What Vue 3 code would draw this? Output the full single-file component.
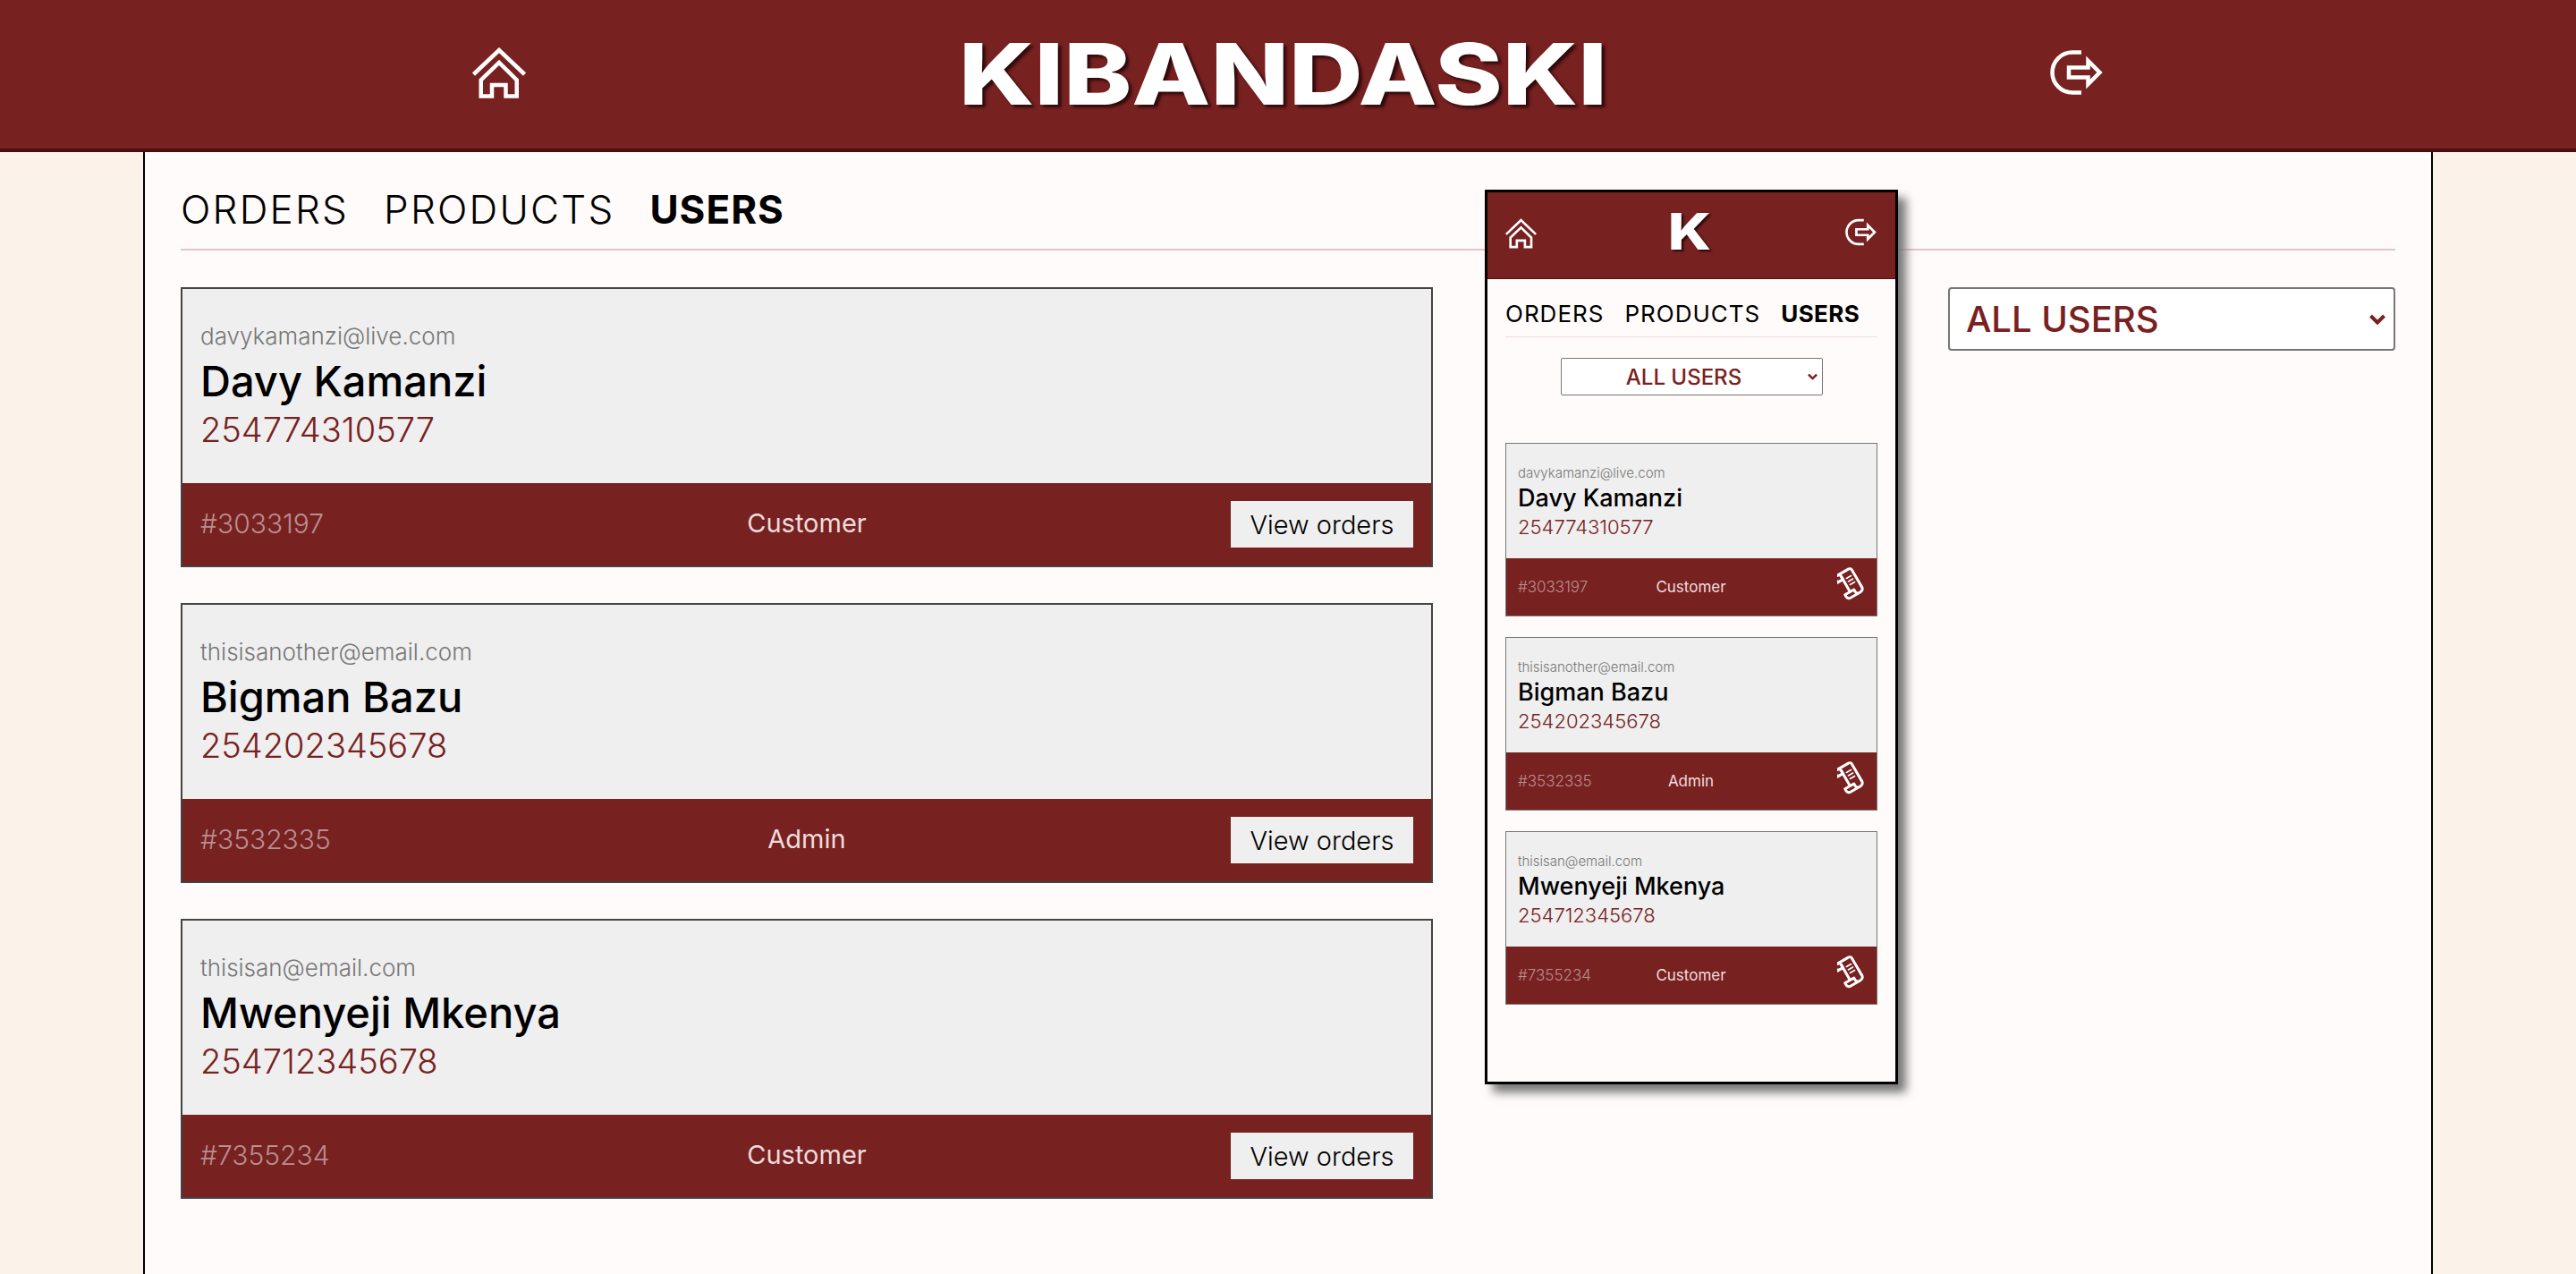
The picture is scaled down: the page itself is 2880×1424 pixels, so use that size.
<script setup>
const users = [
  { email: 'davykamanzi@live.com', name: 'Davy Kamanzi', phone: '254774310577', id: '#3033197', role: 'Customer' },
  { email: 'thisisanother@email.com', name: 'Bigman Bazu', phone: '254202345678', id: '#3532335', role: 'Admin' },
  { email: 'thisisan@email.com', name: 'Mwenyeji Mkenya', phone: '254712345678', id: '#7355234', role: 'Customer' }
]
</script>

<template>
  <div class="page">
    <header class="topbar">
      <svg class="homeIcon" viewBox="0 0 60 57" fill="none" stroke="#fff" stroke-width="4.5">
        <path d="M1.5 30 L30 3 L58.5 30" />
        <path d="M9.75 54.5 V36.5 L30 17 L49.75 36.5 V54.5 H37.5 V42 H22 V54.5 Z" />
      </svg>
      <h1 class="logo">KIBANDASKI</h1>
      <svg class="exitIcon" viewBox="0 0 59 50" fill="none" stroke="#fff" stroke-width="4.5">
        <path d="M35 2.5 H25 A22.5 22.5 0 0 0 25 47.5 H35" />
        <path d="M21 19.5 H42.5 V12 L55.5 25 L42.5 38 V30.5 H21 Z" />
      </svg>
    </header>

    <main class="content">
      <nav class="tabs">
        <span>ORDERS</span>
        <span>PRODUCTS</span>
        <span class="active">USERS</span>
      </nav>

      <div class="columns">
        <div class="cards">
          <article v-for="user in users" :key="user.id" class="card">
            <div class="cardBody">
              <p class="email">{{ user.email }}</p>
              <p class="name">{{ user.name }}</p>
              <p class="phone">{{ user.phone }}</p>
            </div>
            <div class="cardFooter">
              <span class="userId">{{ user.id }}</span>
              <span class="role">{{ user.role }}</span>
              <button class="viewBtn">View orders</button>
            </div>
          </article>
        </div>

        <div class="filterWrap">
          <select class="filter">
            <option>ALL USERS</option>
          </select>
          <svg class="chevron" viewBox="0 0 18 12" fill="none" stroke="#782121" stroke-width="4">
            <path d="M1.5 2 L9 9.5 L16.5 2" />
          </svg>
        </div>
      </div>

      <!-- phone preview, sits on top of the tab divider -->
      <div class="mobile">
        <header class="mTopbar">
          <svg class="mHome" viewBox="0 0 60 57" fill="none" stroke="#fff" stroke-width="4.5">
            <path d="M1.5 30 L30 3 L58.5 30" />
            <path d="M9.75 54.5 V36.5 L30 17 L49.75 36.5 V54.5 H37.5 V42 H22 V54.5 Z" />
          </svg>
          <span class="mLogo">K</span>
          <svg class="mExit" viewBox="0 0 59 50" fill="none" stroke="#fff" stroke-width="4.5">
            <path d="M35 2.5 H25 A22.5 22.5 0 0 0 25 47.5 H35" />
            <path d="M21 19.5 H42.5 V12 L55.5 25 L42.5 38 V30.5 H21 Z" />
          </svg>
        </header>
        <div class="mContent">
          <nav class="mTabs">
            <span>ORDERS</span>
            <span>PRODUCTS</span>
            <span class="active">USERS</span>
          </nav>
          <div class="mFilterWrap">
            <select class="mFilter">
              <option>ALL USERS</option>
            </select>
            <svg class="mChevron" viewBox="0 0 18 12" fill="none" stroke="#782121" stroke-width="4">
              <path d="M1.5 2 L9 9.5 L16.5 2" />
            </svg>
          </div>
          <div class="mCards">
            <article v-for="user in users" :key="user.id" class="mCard">
              <div class="mBody">
                <p class="mEmail">{{ user.email }}</p>
                <p class="mName">{{ user.name }}</p>
                <p class="mPhone">{{ user.phone }}</p>
              </div>
              <div class="mFooter">
                <span class="mId">{{ user.id }}</span>
                <span class="mRole">{{ user.role }}</span>
                <svg class="scroll" viewBox="0 0 30 37" fill="none" stroke="#fff" stroke-width="3" stroke-linejoin="round" stroke-linecap="round">
                  <g transform="rotate(-30 15 18.5)">
                    <path d="M7 3 H21 a3 3 0 0 1 3 3 V27" />
                    <path d="M3 10 V6.5 a3.5 3.5 0 0 1 7 0 V10 Z" />
                    <path d="M10 7 V25" />
                    <path d="M24 27 a4 4 0 0 1 -4 5 H7 a3.5 3.5 0 0 1 -3.5 -3.5 V26 H15 V28.5 a3.5 3.5 0 0 0 3.5 3.5" />
                    <path d="M14 11 H20 M14 15 H20 M14 19 H20" stroke-width="1.6" />
                  </g>
                </svg>
              </div>
            </article>
          </div>
        </div>
      </div>
    </main>
  </div>
</template>

<style>
body {
  background: #fbf2e9;
}
</style>

<style scoped>
.page {
  font-family: Inter, "Open Sans", sans-serif;
  color: #000;
}

p {
  margin: 0;
}

.topbar {
  box-sizing: border-box;
  height: 170px;
  background: #782121;
  border-bottom: 4px solid #4a1010;
  display: flex;
  align-items: center;
  position: relative;
}

.homeIcon {
  width: 60px;
  height: 57px;
  margin-left: 528px;
  margin-top: -3px;
}

.logo {
  margin: -2px 3px 0 484px;
  width: 725px;
  font-size: 95px;
  font-weight: 800;
  line-height: 1;
  color: #fff;
  white-space: nowrap;
  text-shadow: 3px 3px 3px #2e0a0a;
  transform: scaleX(1.205);
  transform-origin: left center;
}

.exitIcon {
  width: 59px;
  height: 50px;
  margin-left: 492px;
  margin-top: -5px;
}

.content {
  box-sizing: border-box;
  position: relative;
  width: 2560px;
  min-height: 1254px;
  margin-left: 160px;
  padding: 0 40px;
  background: #fffbfa;
  border-left: 2px solid #000;
  border-right: 2px solid #000;
}

.tabs {
  height: 110px;
  display: flex;
  align-items: flex-end;
  gap: 39px;
  padding-bottom: 22px;
  box-sizing: border-box;
  border-bottom: 2px solid #dfc7c7;
  font-size: 44px;
  font-weight: 300;
  letter-spacing: 2.2px;
  line-height: 1;
}

.active {
  font-weight: 700;
  letter-spacing: 1px;
}

.columns {
  display: flex;
  justify-content: space-between;
  align-items: flex-start;
  padding-top: 41px;
}

.cards {
  width: 1400px;
  display: flex;
  flex-direction: column;
  gap: 40px;
}

.card {
  box-sizing: border-box;
  height: 313px;
  border: 2px solid #444;
  display: flex;
  flex-direction: column;
}

.cardBody {
  flex: 1;
  background: #efefef;
  padding: 37px 20px 0;
}

.email {
  font-size: 26px;
  font-weight: 300;
  line-height: 32px;
  color: #777;
}

.name {
  margin-top: 4px;
  font-size: 47px;
  font-weight: 500;
  line-height: 60px;
}

.phone {
  font-size: 38px;
  font-weight: 300;
  line-height: 48px;
  color: #782121;
}

.cardFooter {
  height: 92px;
  background: #782121;
  padding: 0 20px;
  display: grid;
  grid-template-columns: 1fr auto 1fr;
  align-items: center;
}

.userId {
  margin-top: -3px;
  font-size: 30px;
  font-weight: 300;
  color: #b98f8f;
}

.role {
  margin-top: -3px;
  font-size: 29px;
  color: #efdcdc;
}

.viewBtn {
  justify-self: end;
  width: 204px;
  height: 52px;
  padding: 0;
  border: none;
  background: #efefef;
  color: #000;
  font-family: inherit;
  font-size: 29px;
  font-weight: 300;
}

.filterWrap {
  position: relative;
  width: 500px;
  height: 71px;
}

.filter {
  box-sizing: border-box;
  width: 100%;
  height: 100%;
  padding: 0 18px;
  appearance: none;
  border: 2px solid #767676;
  border-radius: 4px;
  background: #fff;
  color: #782121;
  font-family: inherit;
  font-size: 40px;
  font-weight: 500;
}

.chevron {
  position: absolute;
  right: 11px;
  top: 30px;
  width: 18px;
  height: 12px;
  pointer-events: none;
}

.mobile {
  box-sizing: border-box;
  position: absolute;
  left: 1498px;
  top: 42px;
  width: 462px;
  height: 1000px;
  background: #fffbfa;
  border: 3px solid #000;
  box-shadow: 9px 9px 10px #777;
}

.mTopbar {
  box-sizing: border-box;
  height: 97px;
  padding: 0 21px 0 20px;
  background: #782121;
  border-bottom: 1px solid #4a1010;
  display: flex;
  justify-content: space-between;
  align-items: center;
}

.mHome {
  width: 35px;
  height: 34px;
  margin-top: -5px;
}

.mExit {
  width: 35px;
  height: 31px;
  margin-top: -8px;
}

.mLogo {
  margin: -10px 0 0 -3px;
  font-size: 57px;
  font-weight: 800;
  line-height: 1;
  color: #fff;
  text-shadow: 2px 2px 2px #2e0a0a;
  transform: scaleX(1.15);
}

.mContent {
  padding: 0 20px;
  display: flex;
  flex-direction: column;
}

.mTabs {
  box-sizing: border-box;
  height: 65px;
  display: flex;
  align-items: flex-end;
  gap: 23px;
  padding-bottom: 12px;
  border-bottom: 1px solid #efe0e0;
  font-size: 26px;
  font-weight: 400;
  letter-spacing: 1px;
  line-height: 1;
}

.mTabs .active {
  letter-spacing: 0.4px;
}

.mFilterWrap {
  position: relative;
  align-self: center;
  width: 293px;
  height: 42px;
  margin-top: 23px;
}

.mFilter {
  box-sizing: border-box;
  width: 100%;
  height: 100%;
  appearance: none;
  padding: 0 17px 0 0;
  border: 1px solid #767676;
  border-radius: 2px;
  background: #fff;
  color: #782121;
  font-family: inherit;
  font-size: 24px;
  font-weight: 500;
  text-align: center;
}

.mChevron {
  position: absolute;
  right: 6px;
  top: 17px;
  width: 11px;
  height: 8px;
  pointer-events: none;
}

.mCards {
  margin-top: 53px;
  display: flex;
  flex-direction: column;
  gap: 23px;
}

.mCard {
  box-sizing: border-box;
  height: 194px;
  border: 1px solid #777;
  display: flex;
  flex-direction: column;
}

.mBody {
  flex: 1;
  background: #efefef;
  padding: 23px 13px 0;
}

.mEmail {
  font-size: 15px;
  font-weight: 300;
  line-height: 19px;
  color: #777;
}

.mName {
  margin-top: 2px;
  font-size: 27px;
  font-weight: 500;
  line-height: 33px;
}

.mPhone {
  margin-top: 3px;
  font-size: 22px;
  font-weight: 300;
  line-height: 27px;
  color: #782121;
}

.mFooter {
  height: 64px;
  background: #782121;
  padding: 0 14px 0 13px;
  display: grid;
  grid-template-columns: 1fr auto 1fr;
  align-items: center;
}

.mId {
  font-size: 17px;
  font-weight: 300;
  color: #b98f8f;
}

.mRole {
  font-size: 17px;
  color: #efdcdc;
}

.scroll {
  justify-self: end;
  width: 30px;
  height: 37px;
  margin-top: -8px;
}
</style>
